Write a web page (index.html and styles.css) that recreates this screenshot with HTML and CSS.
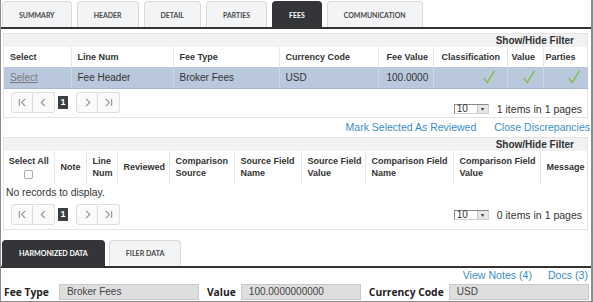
FILE: index.html
```html
<!DOCTYPE html>
<html lang="en">
<head>
    <meta charset="UTF-8">
    <meta name="viewport" content="width=device-width, initial-scale=1.0">
    <title>Fees</title>
    <link rel="stylesheet" href="styles.css">
</head>
<body>
<div class="frame">
    <ul class="tabs">
        <li class="tab">Summary</li>
        <li class="tab">Header</li>
        <li class="tab">Detail</li>
        <li class="tab">Parties</li>
        <li class="tab active">Fees</li>
        <li class="tab">Communication</li>
    </ul>

    <div class="grid first">
        <div class="filter-bar">Show/Hide Filter</div>
        <table class="fees-table">
            <colgroup>
                <col style="width:67px"><col style="width:102px"><col style="width:106px"><col style="width:99px">
                <col style="width:55px"><col style="width:74px"><col style="width:36px"><col style="width:45px">
            </colgroup>
            <thead>
                <tr>
                    <th>Select</th><th>Line Num</th><th>Fee Type</th><th>Currency Code</th>
                    <th>Fee Value</th><th>Classification</th><th>Value</th><th>Parties</th>
                </tr>
            </thead>
            <tbody>
                <tr class="selected">
                    <td><a class="select-link" href="#">Select</a></td>
                    <td>Fee Header</td>
                    <td>Broker Fees</td>
                    <td>USD</td>
                    <td>100.0000</td>
                    <td class="ok"><svg class="tick" viewBox="0 0 12 14"><path d="M0.8 8.2 L4.2 12.6 L11.4 0.8"/></svg></td>
                    <td class="ok"><svg class="tick" viewBox="0 0 12 14"><path d="M0.8 8.2 L4.2 12.6 L11.4 0.8"/></svg></td>
                    <td class="ok"><svg class="tick" viewBox="0 0 12 14"><path d="M0.8 8.2 L4.2 12.6 L11.4 0.8"/></svg></td>
                </tr>
            </tbody>
        </table>
        <div class="pager pager-low">
            <div class="pager-nav">
                <span class="btn-group">
                    <span class="pg-btn"><svg viewBox="0 0 10 10"><path d="M1.5 1 V9 M8 1 L4 5 L8 9"/></svg></span>
                    <span class="pg-btn"><svg viewBox="0 0 10 10"><path d="M6.5 1 L2.5 5 L6.5 9"/></svg></span>
                </span>
                <span class="page-current">1</span>
                <span class="btn-group">
                    <span class="pg-btn"><svg viewBox="0 0 10 10"><path d="M3.5 1 L7.5 5 L3.5 9"/></svg></span>
                    <span class="pg-btn"><svg viewBox="0 0 10 10"><path d="M2 1 L6 5 L2 9 M8.5 1 V9"/></svg></span>
                </span>
            </div>
            <div class="pager-info">
                <span class="page-size"><span class="size-val">10</span><span class="size-arrow">&#9662;</span></span>
                <span>1 items in 1 pages</span>
            </div>
        </div>
    </div>

    <div class="actions">
        <a href="#">Mark Selected As Reviewed</a>
        <a href="#">Close Discrepancies</a>
    </div>

    <div class="grid">
        <div class="filter-bar">Show/Hide Filter</div>
        <table class="disc-table">
            <colgroup>
                <col style="width:50px"><col style="width:32px"><col style="width:31px"><col style="width:52px">
                <col style="width:65px"><col style="width:67px"><col style="width:64px"><col style="width:88px">
                <col style="width:87px"><col style="width:48px">
            </colgroup>
            <thead>
                <tr>
                    <th class="select-all">Select All<span class="checkbox"></span></th>
                    <th>Note</th>
                    <th>Line Num</th>
                    <th>Reviewed</th>
                    <th>Comparison Source</th>
                    <th>Source Field Name</th>
                    <th>Source Field Value</th>
                    <th>Comparison Field Name</th>
                    <th>Comparison Field Value</th>
                    <th>Message</th>
                </tr>
            </thead>
        </table>
        <div class="no-records">No records to display.</div>
        <div class="pager">
            <div class="pager-nav">
                <span class="btn-group">
                    <span class="pg-btn"><svg viewBox="0 0 10 10"><path d="M1.5 1 V9 M8 1 L4 5 L8 9"/></svg></span>
                    <span class="pg-btn"><svg viewBox="0 0 10 10"><path d="M6.5 1 L2.5 5 L6.5 9"/></svg></span>
                </span>
                <span class="page-current">1</span>
                <span class="btn-group">
                    <span class="pg-btn"><svg viewBox="0 0 10 10"><path d="M3.5 1 L7.5 5 L3.5 9"/></svg></span>
                    <span class="pg-btn"><svg viewBox="0 0 10 10"><path d="M2 1 L6 5 L2 9 M8.5 1 V9"/></svg></span>
                </span>
            </div>
            <div class="pager-info">
                <span class="page-size"><span class="size-val">10</span><span class="size-arrow">&#9662;</span></span>
                <span>0 items in 1 pages</span>
            </div>
        </div>
    </div>

    <ul class="tabs sub-tabs">
        <li class="tab active">Harmonized Data</li>
        <li class="tab">Filer Data</li>
    </ul>

    <div class="note-links">
        <a href="#">View Notes (4)</a>
        <a href="#">Docs (3)</a>
    </div>

    <div class="fields">
        <label class="field-label first-label">Fee Type</label>
        <span class="field-input wide">Broker Fees</span>
        <label class="field-label">Value</label>
        <span class="field-input">100.0000000000</span>
        <label class="field-label">Currency Code</label>
        <span class="field-input wide">USD</span>
    </div>
</div>
</body>
</html>
```

FILE: styles.css
```css
* {
    box-sizing: border-box;
}
body {
    margin: 0;
    font-family: "Liberation Sans", Arial, sans-serif;
    color: #333;
    background: #fff;
}
.frame {
    width: 593px;
    height: 302px;
    border-left: 1px solid #8c8c8c;
    border-right: 2px solid #8c8c8c;
    border-bottom: 1px solid #8c8c8c;
    overflow: hidden;
}

/* tabs */
.tabs {
    display: flex;
    gap: 5px;
    margin: 1px 0 0;
    padding: 0 0 0 1px;
    list-style: none;
    border-bottom: 2px solid #333;
}
.tab {
    height: 26px;
    padding: 0 16px;
    display: flex;
    align-items: center;
    background: #f3f4f6;
    border: 1px solid #d9dadc;
    border-bottom: none;
    border-radius: 4px 4px 0 0;
    font-family: Lato, "Open Sans", sans-serif;
    font-weight: 700;
    font-size: 6.95px;
    text-transform: uppercase;
    color: #474747;
    white-space: nowrap;
}
.tab.active {
    background: #333538;
    border-color: #333538;
    color: #fff;
}
.sub-tabs {
    margin-top: 10px;
    gap: 4px;
}
.sub-tabs .tab {
    font-size: 7.1px;
}

/* grids */
.grid {
    margin: 0 3px 0 2px;
    border: 1px solid #e4e4e4;
}
.grid.first {
    margin-top: 4px;
}
.filter-bar {
    height: 13px;
    line-height: 13px;
    background: #f2f2f2;
    text-align: right;
    padding-right: 13px;
    font-size: 10px;
    font-weight: bold;
    color: #333;
}
table {
    width: 100%;
    border-collapse: collapse;
    table-layout: fixed;
}
th {
    height: 20px;
    padding: 0 2px 0 6px;
    text-align: left;
    vertical-align: middle;
    font-size: 9px;
    font-weight: bold;
    color: #333;
}
td {
    height: 21px;
    padding: 0 2px 0 6px;
    font-size: 10px;
    color: #333;
}
th + th,
td + td {
    border-left: 1px solid #e6e6e6;
}
.fees-table th:nth-child(5),
.fees-table td:nth-child(5),
.fees-table th:nth-child(6) {
    padding-left: 8px;
}
.fees-table th:nth-child(7) {
    padding-left: 4px;
}
.fees-table th:nth-child(8) {
    padding-left: 2px;
}
tr.selected td {
    background: #b9c8dc;
    border-bottom: 1px solid #a8b7cb;
}
tr.selected td + td {
    border-left-color: #cdd8e6;
}
.select-link {
    color: #7b7b7b;
    text-decoration: underline;
}
td.ok {
    text-align: right;
    padding-right: 8px;
}
td.ok:nth-child(6) {
    padding-right: 12px;
}
.tick {
    width: 12px;
    height: 14px;
    vertical-align: middle;
    fill: none;
    stroke: #7cc043;
    stroke-width: 1.3;
}
.disc-table th {
    height: 33px;
    line-height: 12.5px;
}
.select-all {
    text-align: center;
    padding: 0;
}
.checkbox {
    display: block;
    width: 9px;
    height: 9px;
    margin: 2px auto 0;
    border: 1px solid #a9a9a9;
    border-radius: 2px;
    background: #fff;
}
.no-records {
    height: 17px;
    line-height: 17px;
    padding-left: 2px;
    font-size: 10.3px;
}

/* pager */
.pager {
    height: 28px;
    display: flex;
    align-items: center;
    justify-content: space-between;
    padding: 0 5px 0 7px;
}
.pager-low .pager-info {
    margin-top: 13px;
}
.pager-nav {
    display: flex;
    align-items: center;
}
.btn-group {
    display: flex;
}
.pg-btn {
    width: 22px;
    height: 21px;
    display: flex;
    align-items: center;
    justify-content: center;
    background: #fafafa;
    border: 1px solid #dedede;
}
.pg-btn + .pg-btn {
    border-left: none;
}
.btn-group .pg-btn:first-child {
    border-radius: 3px 0 0 3px;
}
.btn-group .pg-btn:last-child {
    border-radius: 0 3px 3px 0;
}
.pg-btn svg {
    width: 9px;
    height: 9px;
    fill: none;
    stroke: #8f8f8f;
    stroke-width: 1.2;
}
.page-current {
    width: 10px;
    height: 13px;
    margin: 0 8px 0 3px;
    background: #3c3e41;
    color: #fff;
    font-size: 9px;
    font-weight: bold;
    text-align: center;
    line-height: 13px;
}
.pager-info {
    display: flex;
    align-items: center;
    gap: 8px;
    font-size: 10.5px;
    color: #333;
}
.page-size {
    display: flex;
    height: 10px;
    border: 1px solid #8a8a8a;
    border-right-color: #d0d0d0;
    border-bottom-color: #d0d0d0;
    background: #fff;
}
.size-val {
    width: 22px;
    padding-left: 2px;
    font-size: 10px;
    line-height: 8px;
}
.size-arrow {
    width: 11px;
    background: #e6e6e6;
    border-left: 1px solid #c4c4c4;
    font-size: 6px;
    line-height: 8px;
    text-align: center;
    color: #333;
}

/* links */
.actions,
.note-links {
    display: flex;
    justify-content: flex-end;
    align-items: center;
}
.actions {
    height: 19px;
    gap: 18px;
    padding-right: 1px;
    font-size: 10.5px;
}
.note-links {
    height: 15px;
    gap: 16px;
    padding-right: 3px;
    font-size: 10.6px;
}
.actions a,
.note-links a {
    color: #3a8dc6;
    text-decoration: none;
}

/* harmonized fields */
.fields {
    display: flex;
    align-items: center;
    margin-top: 1px;
    padding-left: 3px;
}
.field-label {
    flex-shrink: 0;
    margin-right: 5px;
    font-family: "Open Sans", sans-serif;
    font-weight: 700;
    font-size: 10.3px;
    color: #222;
    white-space: nowrap;
}
.field-label.first-label {
    margin-right: 10px;
}
.field-input {
    flex-shrink: 0;
    width: 120px;
    height: 16px;
    margin-right: 8px;
    padding-left: 7px;
    background: #dedede;
    border: 1px solid #c9c9c9;
    font-size: 10px;
    line-height: 14px;
    color: #444;
    white-space: nowrap;
}
.field-input.wide {
    width: 140px;
}
.field-input:last-child {
    margin-right: 0;
}
```
